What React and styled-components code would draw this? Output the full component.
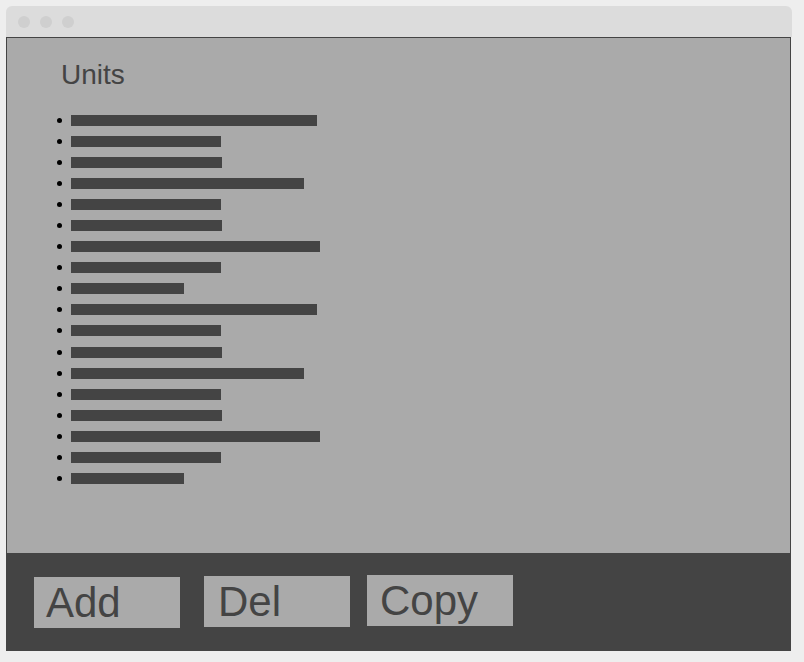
import React from 'react';
import styled, { createGlobalStyle } from 'styled-components';

const GlobalStyle = createGlobalStyle`
  html, body {
    margin: 0;
    padding: 0;
    background: #eeeeee;
    font-family: "Liberation Sans", Arial, sans-serif;
  }
`;

const Window = styled.div`
  width: 786px;
  margin: 6px 0 0 6px;
  display: flex;
  flex-direction: column;
`;

const TitleBar = styled.div`
  height: 31px;
  background: #dcdcdc;
  border-radius: 6px 6px 0 0;
  display: flex;
  align-items: center;
  gap: 10px;
  padding-left: 12px;
  box-sizing: border-box;
`;

const Dot = styled.span`
  width: 12px;
  height: 12px;
  border-radius: 50%;
  background: #cfcfcf;
`;

const Panel = styled.div`
  width: 785px;
  height: 516px;
  box-sizing: border-box;
  background: #aaaaaa;
  border: 1px solid #444444;
  border-bottom: none;
  padding: 21px 0 0 0;
`;

const Title = styled.h1`
  margin: 0 0 19px 54px;
  font-size: 28px;
  font-weight: normal;
  line-height: 32px;
  color: #444444;
`;

const List = styled.ul`
  margin: 0;
  padding: 0;
  list-style: none;
`;

const Row = styled.li`
  height: 21.06px;
  display: flex;
  align-items: center;
  padding-left: 50px;
  gap: 9px;
`;

const Bullet = styled.span`
  width: 5px;
  height: 5px;
  border-radius: 50%;
  background: #000;
`;

const Bar = styled.span`
  height: 11px;
  background: #444444;
`;

const Toolbar = styled.div`
  width: 785px;
  height: 98px;
  background: #444444;
  display: flex;
  align-items: flex-start;
`;

const Button = styled.div`
  width: 146px;
  height: 51px;
  box-sizing: border-box;
  background: #aaaaaa;
  color: #444444;
  font-size: 42px;
  line-height: 51px;
  margin-left: ${(p) => p.$left}px;
  margin-top: ${(p) => p.$top}px;
  padding-left: ${(p) => p.$pad}px;
`;

const widths = [246, 150, 151, 233, 150, 151, 249, 150, 113, 246, 150, 151, 233, 150, 151, 249, 150, 113];

const buttons = [
  { label: 'Add', left: 28, top: 24, pad: 12 },
  { label: 'Del', left: 24, top: 23, pad: 14 },
  { label: 'Copy', left: 17, top: 22, pad: 13 },
];

export default function App() {
  return (
    <>
      <GlobalStyle />
      <Window>
        <TitleBar>
          <Dot />
          <Dot />
          <Dot />
        </TitleBar>
        <Panel>
          <Title>Units</Title>
          <List>
            {widths.map((w, i) => (
              <Row key={i}>
                <Bullet />
                <Bar style={{ width: w }} />
              </Row>
            ))}
          </List>
        </Panel>
        <Toolbar>
          {buttons.map((b) => (
            <Button key={b.label} $left={b.left} $top={b.top} $pad={b.pad}>
              {b.label}
            </Button>
          ))}
        </Toolbar>
      </Window>
    </>
  );
}
